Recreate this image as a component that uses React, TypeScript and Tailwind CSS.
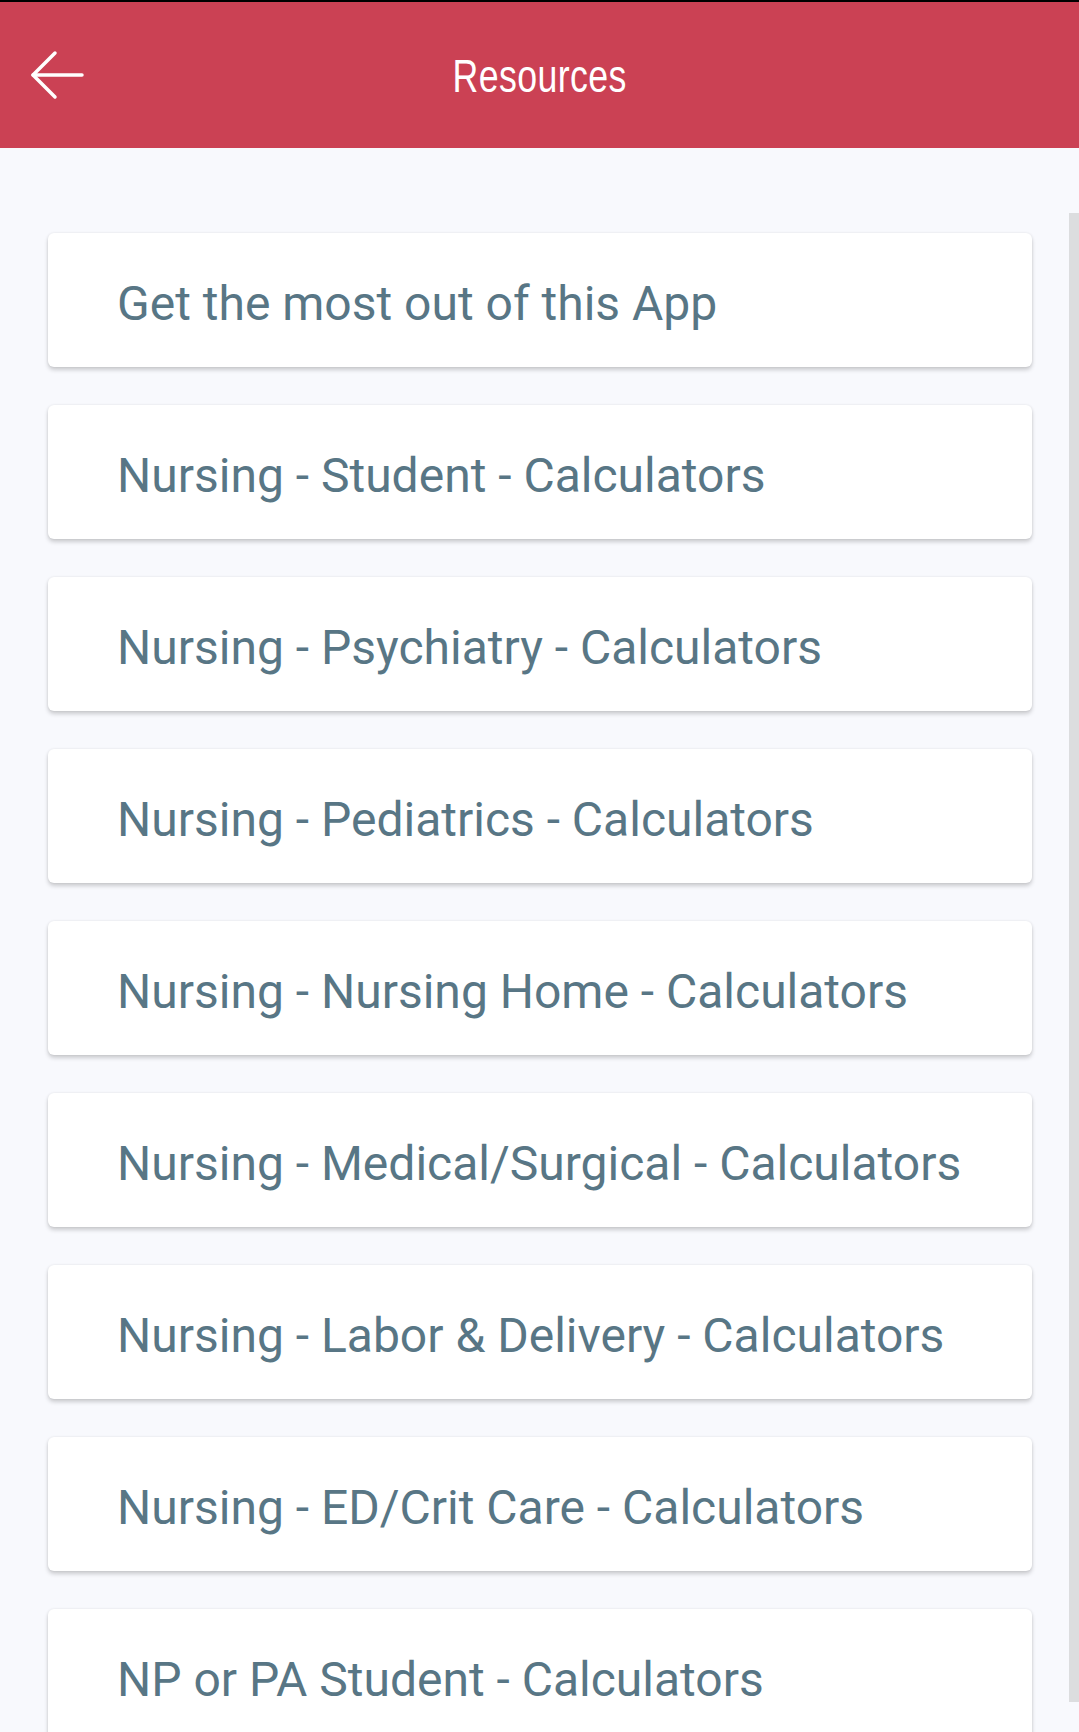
import React from 'react';

const ITEMS = [
  'Get the most out of this App',
  'Nursing - Student - Calculators',
  'Nursing - Psychiatry - Calculators',
  'Nursing - Pediatrics - Calculators',
  'Nursing - Nursing Home - Calculators',
  'Nursing - Medical/Surgical - Calculators',
  'Nursing - Labor & Delivery - Calculators',
  'Nursing - ED/Crit Care - Calculators',
  'NP or PA Student - Calculators',
];

const BackArrow = () => (
  <svg width="56" height="50" viewBox="0 0 56 50" fill="none" stroke="white" strokeWidth="3.5" strokeLinecap="round" strokeLinejoin="round">
    <path d="M3 25 H52" />
    <path d="M25 3 L3 25 L25 47" />
  </svg>
);

export default function App() {
  return (
    <div className="relative w-[1079px] h-[1732px] overflow-hidden bg-[#f8f9fd] font-['Roboto',sans-serif]">
      {/* Status bar remnant */}
      <div className="h-[2px] bg-black" />

      {/* Header */}
      <div className="relative h-[146px] bg-[#cb4154] flex items-center justify-center">
        <button className="absolute left-[30px] top-[48px]">
          <BackArrow />
        </button>
        <h1 className="text-white text-[47px] font-['Liberation_Sans',sans-serif] leading-none scale-x-[0.76] tracking-[0.5px]">
          Resources
        </h1>
      </div>

      {/* List */}
      <div className="pl-[48px] pr-[47px] pt-[85px] flex flex-col gap-[38px]">
        {ITEMS.map((item) => (
          <div
            key={item}
            className="h-[134px] shrink-0 rounded-[6px] bg-white flex items-center pl-[69px] shadow-[0_3px_4px_rgba(0,0,0,0.18),0_0_3px_rgba(0,0,0,0.08)]"
          >
            <span className="mt-[7px] text-[48px] text-[#587685] leading-none whitespace-nowrap">{item}</span>
          </div>
        ))}
      </div>

      {/* Scrollbar thumb */}
      <div className="absolute right-0 top-[213px] w-[10px] h-[1489px] bg-[#dcdddf]" />
    </div>
  );
}
